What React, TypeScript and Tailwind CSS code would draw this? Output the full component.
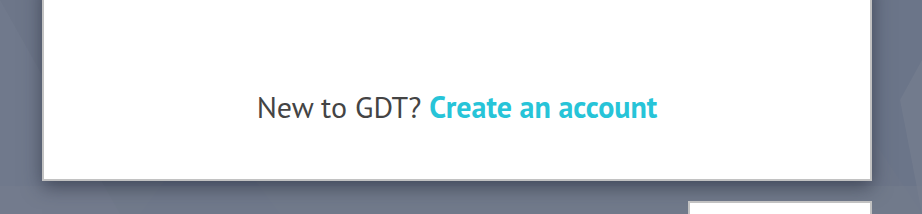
import React from 'react';

const Backdrop: React.FC = () => (
  <svg className="absolute inset-0 h-full w-full" viewBox="0 0 922 214" preserveAspectRatio="none">
    <rect width="922" height="214" fill="#6d7689" />
    <polygon points="0,0 120,214 0,214" fill="#737b8d" opacity="0.6" />
    <polygon points="140,214 210,120 280,214" fill="#68728a" opacity="0.5" />
    <polygon points="820,0 922,0 922,214 860,120" fill="#6a7488" opacity="0.6" />
    <polygon points="900,100 922,60 922,214" fill="#7a8192" opacity="0.5" />
    <rect x="0" y="186" width="922" height="28" fill="#767d8e" opacity="0.5" />
  </svg>
);

const App: React.FC = () => {
  return (
    <div className="relative h-[214px] w-[922px] overflow-hidden bg-[#6d7689]">
      <Backdrop />
      <div className="relative flex flex-col">
        {/* Login card (top is scrolled out of view) */}
        <div className="ml-[42px] mt-[-20px] flex h-[201px] w-[830px] items-end justify-center border-x-2 border-b-2 border-[#c2c2c2] bg-white pb-[57px] shadow-[0_6px_18px_rgba(30,35,50,0.55)]">
          <p className="text-[30px] leading-none text-[#444444]" style={{ fontFamily: '"PT Sans", Lato, "Open Sans", sans-serif' }}>
            New to GDT?{' '}
            <a href="#" className="font-bold text-[#27c4d8]">
              Create an account
            </a>
          </p>
        </div>
        <div className="ml-[688px] mt-[20px] h-[40px] w-[184px] border-2 border-[#c2c2c2] bg-white" />
      </div>
    </div>
  );
};

export default App;
